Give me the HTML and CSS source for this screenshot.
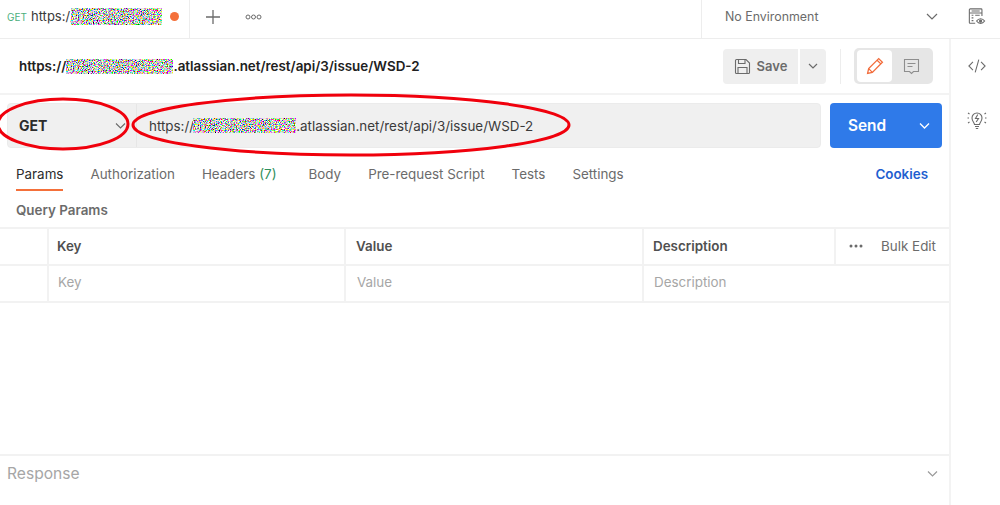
FILE: index.html
```html
<!DOCTYPE html>
<html lang="en">
<head>
<meta charset="utf-8">
<title>Postman request</title>
<link rel="stylesheet" href="styles.css">
</head>
<body>
<svg class="defs" width="0" height="0" aria-hidden="true">
  <filter id="noise" x="0" y="0" width="100%" height="100%">
    <feTurbulence type="fractalNoise" baseFrequency="0.8" numOctaves="2" seed="7"/>
    <feColorMatrix type="matrix" values="4.5 0 0 0 -1.6  0 4.5 0 0 -1.6  0 0 4.5 0 -1.6  0 0 0 0 1"/>
    <feGaussianBlur stdDeviation="0.35"/>
  </filter>
</svg>
<div class="app">
  <header class="topbar">
    <div class="tab">
      <span class="tab-method">GET</span>
      <span class="tab-url">https://<svg class="noise noise-tab"><rect width="100%" height="100%" filter="url(#noise)"/></svg></span>
      <span class="tab-dot"></span>
    </div>
    <button class="plus" aria-label="New tab"><svg width="14" height="14" viewBox="0 0 14 14"><path d="M7 0v14M0 7h14" stroke="#6b6b6b" stroke-width="1.3" fill="none"/></svg></button>
    <button class="more" aria-label="More tabs"><svg width="17" height="6" viewBox="0 0 17 6"><g fill="none" stroke="#6b6b6b" stroke-width="1"><circle cx="3" cy="3" r="2"/><circle cx="8.500" cy="3" r="2"/><circle cx="14" cy="3" r="2"/></g></svg></button>
    <div class="env">
      <span>No Environment</span>
      <svg class="chev" width="12" height="7" viewBox="0 0 12 7"><path d="M1 1l5 5 5-5" stroke="#6b6b6b" stroke-width="1.2" fill="none"/></svg>
    </div>
    <div class="env-view">
      <svg width="18" height="18" viewBox="0 0 20 20" fill="none" stroke="#6b6b6b" stroke-width="1.2"><path d="M8 17H2.500a1 1 0 0 1-1-1V2a1 1 0 0 1 1-1h12a1 1 0 0 1 1 1v7"/><path d="M1.500 5.500h14M4 3.300h9M4 8h2M8 8h5M4 11h2M4 14h2"/><path d="M9.500 14.500c2.500-3.500 6.500-3.500 9 0-2.500 3.500-6.500 3.500-9 0z"/><circle cx="14" cy="14.500" r="1.200" fill="#6b6b6b"/></svg>
    </div>
  </header>
  <div class="body">
    <main class="main">
      <section class="title-row">
        <h1 class="title">https://<svg class="noise noise-title"><rect width="100%" height="100%" filter="url(#noise)"/></svg>.atlassian.net/rest/api/3/issue/WSD-2</h1>
        <div class="actions">
          <button class="save">
            <svg width="17" height="17" viewBox="0 0 17 17" fill="none" stroke="#6b6b6b" stroke-width="1.1"><path d="M1.500 2.500a1 1 0 0 1 1-1h9.500l3.500 3.500v9.500a1 1 0 0 1-1 1h-12a1 1 0 0 1-1-1z"/><path d="M4.500 1.500v4h6.500v-4M4 15.500v-6h9v6"/></svg>
            Save
          </button>
          <button class="save-more" aria-label="Save options"><svg width="10" height="6" viewBox="0 0 10 6"><path d="M1 1l4 4 4-4" stroke="#6b6b6b" stroke-width="1.2" fill="none"/></svg></button>
          <span class="sep"></span>
          <div class="toggle">
            <span class="toggle-on"><svg width="18" height="18" viewBox="0 0 17 17" fill="none" stroke="#f26b3a" stroke-width="1.2"><path d="M1.500 15.500l1-4.500L12 1.500l3.500 3.500L6 14.500zM10.500 3l3.500 3.500M2.500 11l3.500 3.500"/></svg></span>
            <span class="toggle-off"><svg width="17" height="17" viewBox="0 0 17 17" fill="none" stroke="#8e8e8e" stroke-width="1.1"><path d="M1.500 1.500h14v12h-5l-2 2-2-2h-5z"/><path d="M4.500 5.500h8M4.500 8.500h5"/></svg></span>
          </div>
        </div>
      </section>
      <section class="url-row">
        <div class="url-box">
          <div class="method">GET<svg width="11" height="6" viewBox="0 0 11 6"><path d="M1 .5l4.500 4.500L10 .5" stroke="#6b6b6b" stroke-width="1.1" fill="none"/></svg></div>
          <div class="url">https://<svg class="noise noise-url"><rect width="100%" height="100%" filter="url(#noise)"/></svg>.atlassian.net/rest/api/3/issue/WSD-2</div>
        </div>
        <button class="send"><span>Send</span><svg width="11" height="6" viewBox="0 0 11 6"><path d="M1 .5l4.500 4.500L10 .5" stroke="#fff" stroke-width="1.3" fill="none"/></svg></button>
      </section>
      <nav class="tabs">
        <a class="active">Params</a>
        <a>Authorization</a>
        <a>Headers <em>(7)</em></a>
        <a class="body-tab">Body</a>
        <a>Pre-request Script</a>
        <a>Tests</a>
        <a>Settings</a>
        <a class="cookies">Cookies</a>
      </nav>
      <div class="query">Query Params</div>
      <div class="table">
        <div class="row head">
          <div class="cell check"></div>
          <div class="cell">Key</div>
          <div class="cell">Value</div>
          <div class="cell">Description</div>
          <div class="cell bulk"><svg width="14" height="4" viewBox="0 0 14 4" fill="#6b6b6b"><circle cx="2" cy="2" r="1.500"/><circle cx="7" cy="2" r="1.500"/><circle cx="12" cy="2" r="1.500"/></svg><span>Bulk Edit</span></div>
        </div>
        <div class="row ph">
          <div class="cell check"></div>
          <div class="cell">Key</div>
          <div class="cell">Value</div>
          <div class="cell wide">Description</div>
        </div>
      </div>
      <footer class="response">
        <span>Response</span>
        <svg width="11" height="6" viewBox="0 0 11 6"><path d="M1 .5l4.500 4.500L10 .5" stroke="#9a9a9a" stroke-width="1.2" fill="none"/></svg>
      </footer>
    </main>
    <aside class="side">
      <svg width="18" height="16" viewBox="0 0 20 16" fill="none" stroke="#6b6b6b" stroke-width="1.2"><path d="M5.500 3.500L1 8l4.500 4.500M14.500 3.500L19 8l-4.500 4.500M12 1L8 15"/></svg>
      <svg width="20" height="20" viewBox="0 0 20 20" fill="none" stroke="#6b6b6b" stroke-width="1.1"><path d="M7.500 14.500c0-2-2.500-3-2.500-6.500a5 5 0 0 1 10 0c0 3.500-2.500 4.500-2.500 6.500zM8 16.500h4M8.800 18.500h2.400"/><path d="M10.800 4.500L8.500 8.500h3L9.200 12M1 3l1.500 1M19 3l-1.500 1M.5 8h1.500M18 8h1.500M1 13l1.500-1M19 13l-1.500-1"/></svg>
    </aside>
  </div>
  <svg class="marks" width="1000" height="505" viewBox="0 0 1000 505" fill="none" stroke="#f0000c" stroke-width="3" aria-hidden="true">
    <ellipse cx="63" cy="124" rx="65" ry="25"/>
    <ellipse cx="351" cy="125" rx="218" ry="30"/>
  </svg>
</div>
</body>
</html>
```
FILE: styles.css
```css
* { box-sizing: border-box; }
html, body { margin: 0; padding: 0; }
body {
  font-family: Inter, "Liberation Sans", sans-serif;
  color: #212121;
  background: #fff;
  overflow: hidden;
}
button { font: inherit; border: 0; padding: 0; background: none; }
.defs { position: absolute; }
.app { position: relative; width: 1000px; height: 505px; display: flex; flex-direction: column; }
.marks { position: absolute; left: 0; top: 0; pointer-events: none; }
.noise { display: inline-block; vertical-align: middle; }
.noise-tab { width: 91px; height: 17px; margin: -2px 0 0 -4px; }
.noise-title { width: 107px; height: 15px; margin-top: -2px; }
.noise-url { width: 103px; height: 15px; margin-left: -1px; }

.topbar { height: 39px; flex: none; display: flex; align-items: stretch; border-bottom: 1px solid #ededed; }
.tab { width: 190px; display: flex; align-items: center; padding: 0 0 5px 7px; border-right: 1px solid #ededed; }
.tab-method { font-size: 10px; color: #4caf7d; width: 24px; }
.tab-url { font-size: 13px; color: #3a3a3a; white-space: nowrap; width: 139px; }
.tab-dot { width: 9px; height: 9px; border-radius: 50%; background: #f4703a; }
.plus { width: 14px; margin-left: 16px; padding-bottom: 5px; display: flex; align-items: center; }
.more { width: 17px; margin-left: 25px; padding-bottom: 5px; display: flex; align-items: center; }
.env { margin-left: auto; width: 249px; border-left: 1px solid #ededed; display: flex; align-items: center; justify-content: space-between; padding: 0 12px 5px 23px; font-size: 12.400px; color: #6b6b6b; }
.env-view { width: 50px; display: flex; align-items: center; justify-content: center; padding: 0 0 5px 4px; }

.body { flex: 1; display: flex; min-height: 0; }
.main { width: 951px; flex: none; display: flex; flex-direction: column; border-right: 2px solid #f3f3f3; }
.side { flex: 1; display: flex; flex-direction: column; align-items: center; gap: 36px; padding: 19px 0 0 2px; }

.title-row { height: 56px; flex: none; display: flex; align-items: center; justify-content: space-between; padding: 0 16px 0 19px; border-bottom: 2px solid #f3f3f3; }
.title { margin: 0; font-size: 13.400px; font-weight: 600; color: #212121; white-space: nowrap; }
.actions { display: flex; align-items: center; }
.save { width: 75px; height: 35px; background: #efefef; border-radius: 4px 0 0 4px; display: flex; align-items: center; justify-content: center; gap: 6px; font-size: 13px; font-weight: 600; color: #6b6b6b; }
.save-more { width: 26px; height: 35px; margin-left: 2px; background: #efefef; border-radius: 0 4px 4px 0; display: flex; align-items: center; justify-content: center; }
.sep { width: 1px; height: 35px; background: #ededed; margin: 0 13px 0 14px; }
.toggle { width: 79px; height: 36px; background: #e6e6e6; border-radius: 5px; padding: 2px 3px; display: flex; }
.toggle-on { width: 35px; background: #fff; border-radius: 4px; display: flex; align-items: center; justify-content: center; }
.toggle-off { flex: 1; display: flex; align-items: center; justify-content: center; }

.url-row { flex: none; display: flex; gap: 9px; padding: 8px 0 0 7px; }
.url-box { width: 814px; height: 45px; flex: none; display: flex; background: #f0f0f0; border: 1px solid #ebebeb; border-radius: 4px; font-size: 13.400px; }
.method { width: 129px; display: flex; align-items: center; justify-content: space-between; padding: 0 10px 0 11px; font-weight: 700; font-size: 14px; color: #2c2c2c; border-right: 1px solid #e6e6e6; }
.url { flex: 1; display: flex; align-items: center; padding-left: 12px; color: #3a3a3a; white-space: pre; }
.send { width: 112px; height: 45px; flex: none; background: #2f7ae9; border-radius: 4px; color: #fff; font-size: 15.400px; font-weight: 600; display: flex; align-items: center; justify-content: space-between; padding: 0 12px 0 18px; }

.tabs { flex: none; height: 43px; display: flex; align-items: stretch; gap: 27px; padding: 0 21px 0 16px; font-size: 13.400px; color: #6b6b6b; }
.tabs a { display: flex; align-items: center; height: 43px; white-space: pre; border-bottom: 2px solid transparent; padding-top: 10px; }
.tabs .active { color: #2c2c2c; border-bottom-color: #f4703a; }
.tabs em { font-style: normal; color: #2f8f5b; }
.tabs .body-tab { margin-left: 5px; }
.tabs .cookies { margin-left: auto; color: #1f5fd0; font-weight: 600; }

.query { flex: none; height: 36px; padding: 11px 0 0 16px; font-size: 13.400px; font-weight: 600; color: #6b6b6b; }
.table { flex: none; border-top: 2px solid #f2f2f2; }
.row { display: grid; grid-template-columns: 49px 297px 298px 192px 1fr; border-bottom: 2px solid #f2f2f2; }
.row.ph { grid-template-columns: 49px 297px 298px 1fr; }
.head { height: 37px; font-size: 13.400px; font-weight: 600; color: #505050; }
.ph { height: 37px; font-size: 13.400px; color: #a6a6a6; }
.cell { display: flex; align-items: center; padding: 0 0 2px 9px; border-right: 2px solid #f2f2f2; }
.ph .cell { padding-bottom: 3px; }
.row .check { padding: 0; }
.head .cell:nth-child(2) { padding-left: 8px; }
.head .cell:nth-child(3) { padding-left: 10px; }
.ph .cell:nth-child(3) { padding-left: 11px; }
.ph .wide { border-right: 0; padding-left: 10px; }
.bulk { border-right: 0; justify-content: space-between; padding: 0 13px 2px 13px; font-weight: 400; color: #6b6b6b; }

.response { margin-top: auto; flex: none; height: 51px; display: flex; align-items: center; justify-content: space-between; padding: 0 11px 14px 7px; border-top: 2px solid #f2f2f2; font-size: 15.600px; color: #a6a6a6; }
```
